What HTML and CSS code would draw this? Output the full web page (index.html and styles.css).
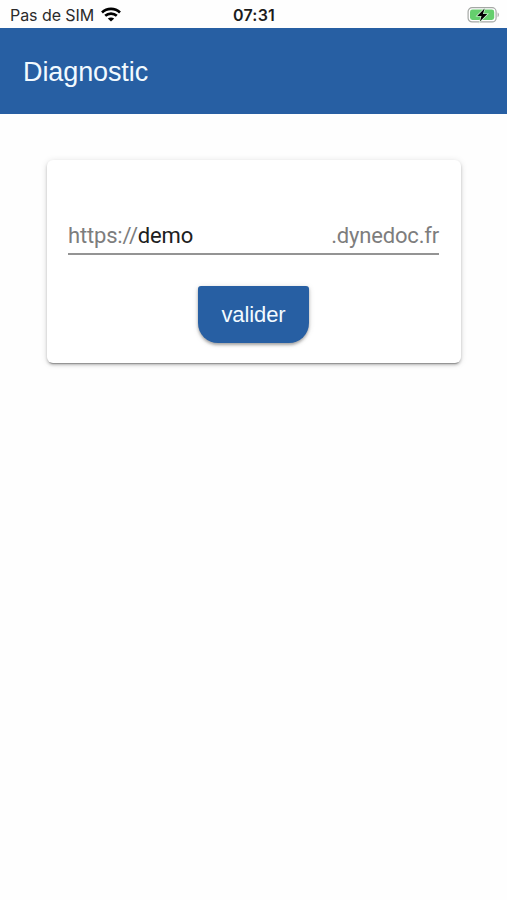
FILE: index.html
```html
<!DOCTYPE html>
<html lang="fr">

<head>
    <meta charset="UTF-8">
    <meta name="viewport" content="width=device-width, initial-scale=1.0">
    <title>Diagnostic</title>
    <link rel="stylesheet" href="styles.css">
</head>

<body>
    <div class="status-bar">
        <div class="network">
            <span class="carrier">Pas de SIM</span>
            <svg class="wifi" viewBox="0 0 20 15" width="20" height="15">
                <path d="M1 5.4C6 .8 14 .8 19 5.4" />
                <path d="M4.2 8.8c3.3-2.9 8.3-2.9 11.6 0" />
                <path class="dot" d="M10 14.6l-3.2-3.1c1.8-1.5 4.6-1.5 6.4 0z" />
            </svg>
        </div>
        <span class="clock">07:31</span>
        <svg class="battery" viewBox="0 0 33 18" width="33" height="18">
            <rect x="1.1" y="1.7" width="28" height="14.2" rx="4" fill="#fff" stroke="#a5a8a5" stroke-width="1.2" />
            <rect x="3" y="3.6" width="24.2" height="10.4" rx="2.4" fill="#65cf6d" />
            <path d="M30.6 6.5c1.7.7 1.7 4 0 4.7z" fill="#a5a8a5" />
            <path d="M17.6 2.4l-7.4 7.5h4.3l-1.6 5.6 7.4-7.4H16z" fill="#000" stroke="#d8f3da" stroke-width="1.4" paint-order="stroke" />
        </svg>
    </div>

    <header>
        <h1>Diagnostic</h1>
    </header>

    <main class="container">
        <form class="card">
            <div class="field">
                <label for="domain">https://</label>
                <input type="text" id="domain" name="domain" value="demo">
                <span class="suffix">.dynedoc.fr</span>
            </div>
            <button type="button" class="button">valider</button>
        </form>
    </main>
</body>

</html>
```

FILE: styles.css
```css
* {
    box-sizing: border-box;
}

body {
    display: flex;
    flex-direction: column;
    min-height: 100vh;
    font-family: "Liberation Sans", Arial, sans-serif;
    margin: 0;
    background-color: #fefefe;
}

.status-bar {
    display: grid;
    grid-template-columns: 1fr auto 1fr;
    align-items: center;
    height: 28px;
    padding: 1px 7px 0 10px;
    font-family: Inter, sans-serif;
    font-size: 16px;
    color: #2b2b2b;
}

.network {
    display: flex;
    align-items: center;
    gap: 7px;
}

.carrier {
    letter-spacing: -0.06px;
}

.wifi {
    fill: none;
    stroke: #000;
    stroke-width: 2.7;
}

.wifi .dot {
    fill: #000;
    stroke: none;
}

.clock {
    margin-right: 2px;
    font-weight: 600;
    letter-spacing: 0.2px;
    color: #1c1c1c;
}

.battery {
    justify-self: end;
}

header {
    display: flex;
    align-items: center;
    height: 86px;
    padding: 2px 23px 0;
    background-color: #275fa3;
    color: #f2faff;
}

header h1 {
    margin: 0;
    font-size: 27px;
    font-weight: normal;
    letter-spacing: -0.1px;
}

.container {
    flex: 1;
    padding: 46px 46px 0 47px;
}

.card {
    height: 203px;
    padding: 57px 22px 0 21px;
    background-color: #fff;
    border-radius: 6px;
    box-shadow: 0 3px 1px -2px rgba(0, 0, 0, 0.25), 0 2px 3px rgba(0, 0, 0, 0.22), 0 1px 7px rgba(0, 0, 0, 0.12);
    text-align: center;
}

.field {
    display: flex;
    align-items: center;
    height: 38px;
    margin-bottom: 31px;
    border-bottom: 2px solid #949494;
    font-family: Roboto, sans-serif;
    font-size: 22px;
    letter-spacing: -0.18px;
    color: #7d7d7d;
}

.field input {
    flex: 1;
    min-width: 0;
    padding: 0;
    border: none;
    outline: none;
    background: none;
    font: inherit;
    letter-spacing: inherit;
    color: #202020;
}

.button {
    width: 111px;
    height: 57px;
    padding: 1px 0 0;
    border: none;
    border-radius: 3px 3px 20px 20px;
    background-color: #275fa3;
    box-shadow: 0 2px 3px rgba(0, 0, 0, 0.3), 0 1px 6px rgba(0, 0, 0, 0.12);
    color: #f2faff;
    font-family: inherit;
    font-size: 22px;
    letter-spacing: -0.1px;
    cursor: pointer;
}
```
